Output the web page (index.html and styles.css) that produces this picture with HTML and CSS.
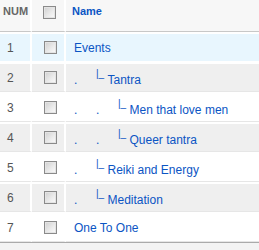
FILE: index.html
```html
<!DOCTYPE html>
<html>
<head>
<meta charset="utf-8">
<link rel="stylesheet" href="styles.css">
</head>
<body>
<table class="list">
  <thead>
    <tr>
      <th class="c-num">NUM</th>
      <th class="c-chk"><input class="cb cb-head" type="checkbox"></th>
      <th class="c-name"><a class="sort">Name</a></th>
    </tr>
  </thead>
  <tbody>
    <tr class="row sel">
      <td class="c-num">1</td>
      <td class="c-chk"><input class="cb" type="checkbox"></td>
      <td class="c-name"><a class="item">Events</a></td>
    </tr>
    <tr class="row odd">
      <td class="c-num">2</td>
      <td class="c-chk"><input class="cb" type="checkbox"></td>
      <td class="c-name"><a class="item"><span class="sp">.</span><sup class="br">|_</sup>&nbsp;Tantra</a></td>
    </tr>
    <tr class="row even">
      <td class="c-num">3</td>
      <td class="c-chk"><input class="cb" type="checkbox"></td>
      <td class="c-name"><a class="item"><span class="sp">.</span><span class="sp">.</span><sup class="br">|_</sup>&nbsp;Men that love men</a></td>
    </tr>
    <tr class="row odd">
      <td class="c-num">4</td>
      <td class="c-chk"><input class="cb" type="checkbox"></td>
      <td class="c-name"><a class="item"><span class="sp">.</span><span class="sp">.</span><sup class="br">|_</sup>&nbsp;Queer tantra</a></td>
    </tr>
    <tr class="row even">
      <td class="c-num">5</td>
      <td class="c-chk"><input class="cb" type="checkbox"></td>
      <td class="c-name"><a class="item"><span class="sp">.</span><sup class="br">|_</sup>&nbsp;Reiki and Energy</a></td>
    </tr>
    <tr class="row odd">
      <td class="c-num">6</td>
      <td class="c-chk"><input class="cb" type="checkbox"></td>
      <td class="c-name"><a class="item"><span class="sp">.</span><sup class="br">|_</sup>&nbsp;Meditation</a></td>
    </tr>
    <tr class="row even">
      <td class="c-num">7</td>
      <td class="c-chk"><input class="cb" type="checkbox"></td>
      <td class="c-name"><a class="item">One To One</a></td>
    </tr>
  </tbody>
  <tfoot>
    <tr><td class="foot" colspan="3"></td></tr>
  </tfoot>
</table>
</body>
</html>
```
FILE: styles.css
```css
html, body {
  margin: 0;
  padding: 0;
  background: #f3f3f3;
  font-family: "Liberation Sans", Arial, sans-serif;
  font-size: 12px;
  color: #555;
}

.list {
  width: 100%;
  border-collapse: separate;
  border-spacing: 0;
  background: #fff;
}

.list th {
  background: #f7f7f7;
  font-size: 11px;
  font-weight: bold;
  line-height: 13px;
  padding: 5px 0 12px;
  text-align: left;
  vertical-align: top;
  border-bottom: 1px solid #c8c8c8;
  color: #666;
}

.c-num {
  width: 30px;
  padding-left: 0;
  border-right: 2px solid #fff;
}

.c-chk {
  width: 32px;
  border-right: 2px solid #fff;
}

.list th.c-num { padding-left: 3px; width: 27px; }
.list th.c-chk { padding-left: 11px; width: 21px; }
.list th.c-name { padding-left: 6px; }

.sort {
  color: #0b55c4;
}

.list td {
  padding: 4px 0;
  border-top: 2px solid #fff;
  border-bottom: 1px solid #e6e6e6;
  vertical-align: middle;
}

.list td.c-num { padding-left: 7px; width: 23px; }
.list td.c-chk { padding-left: 12px; width: 20px; }
.list td.c-name { padding-left: 8px; }

.row.sel td { background: #e8f6fe; border-bottom-color: #fff; }
.row.odd td { background: #efefef; }
.row.even td { background: #fff; }

.cb {
  -webkit-appearance: none;
  appearance: none;
  display: block;
  width: 13px;
  height: 13px;
  margin: 3px 0;
  box-sizing: border-box;
  border: 1px solid #8a8a8a;
  background: linear-gradient(135deg, #cfcfcf 0%, #ececec 60%, #fbfbfb 100%);
  box-shadow: inset 0 0 0 1px #e4e4e4;
}

.cb-head {
  margin: 1px 0 0;
}

.item {
  color: #0b55c4;
  white-space: nowrap;
}

.sp {
  display: inline-block;
  width: 22px;
}

.br {
  font-size: 10px;
  vertical-align: 7px;
}

.list td.foot {
  padding: 0;
  height: 20px;
  background: #f3f3f3;
  border-top: 1px solid #aaa;
  border-bottom: 0;
}
```
